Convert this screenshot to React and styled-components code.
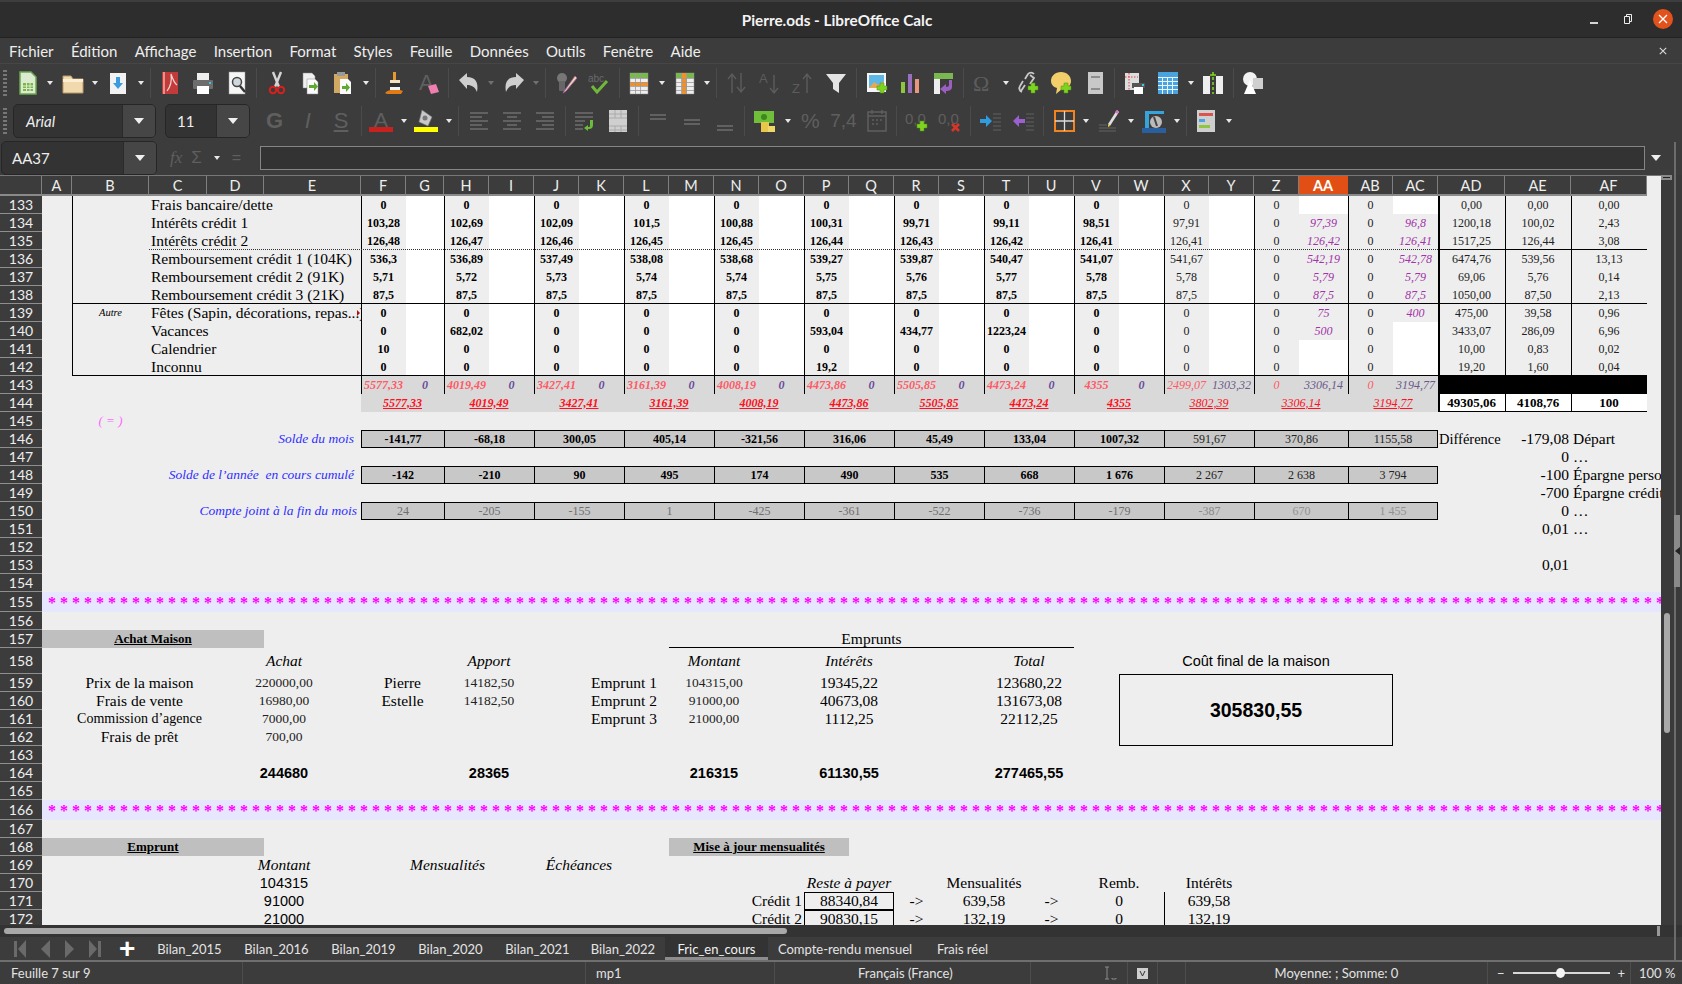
import React from 'react';
import styled, { createGlobalStyle, css } from 'styled-components';

const UI = `Lato, "Noto Sans", sans-serif`;
const SERIF = `"Liberation Serif", serif`;
const SANS = `"Liberation Sans", sans-serif`;

const Global = createGlobalStyle`
  html, body { margin: 0; width: 1682px; height: 984px; overflow: hidden; background: #3c3c3c; }
  * { box-sizing: border-box; }
`;

/* ---------- window chrome ---------- */
const Window = styled.div`
  position: relative;
  width: 1682px;
  height: 984px;
  display: flex;
  flex-direction: column;
  background: #3c3c3c;
  color: #eee;
  font-family: ${UI};
  overflow: hidden;
`;
const TitleBar = styled.div`
  height: 38px;
  flex: none;
  position: relative;
  display: flex;
  align-items: center;
  justify-content: center;
  padding-right: 8px;
  background: #2d2d2d;
  border-top: 2px solid #3d3d3d;
  border-bottom: 1px solid #232323;
  font-size: 15.3px;
  font-weight: 700;
  color: #f4f4f4;
`;
const WinButtons = styled.div`
  position: absolute;
  right: 9px;
  top: 7px;
  display: flex;
  align-items: center;
  gap: 17px;
`;
const WinClose = styled.div`
  width: 20px;
  height: 20px;
  margin-left: 1px;
  border-radius: 50%;
  background: #e2521d;
  display: flex;
  align-items: center;
  justify-content: center;
`;
const MenuBar = styled.div`
  height: 25px;
  flex: none;
  display: flex;
  align-items: center;
  justify-content: space-between;
  padding: 0 15px 0 9px;
`;
const MenuList = styled.div`
  display: flex;
  gap: 17.3px;
  font-size: 15px;
  color: #eee;
`;
const ToolBar = styled.div`
  height: ${p => p.$h}px;
  flex: none;
  display: flex;
  align-items: center;
  padding-left: 3px;
  border-top: ${p => (p.$line ? '1px solid #464646' : '0')};
`;
const Grip = styled.div`
  width: 4px;
  height: 26px;
  margin-right: ${p => p.$gap}px;
  background: repeating-linear-gradient(#777 0 2px, transparent 2px 4px);
  flex: none;
`;
const ToolBtn = styled.div`
  width: 33.2px;
  height: 28px;
  flex: none;
  display: flex;
  align-items: center;
  justify-content: center;
`;
const Caret = styled.div`
  width: 12px;
  flex: none;
  display: flex;
  justify-content: center;
  &::before {
    content: '';
    border-left: 3.5px solid transparent;
    border-right: 3.5px solid transparent;
    border-top: 4px solid ${p => (p.$dim ? '#707070' : '#e8e8e8')};
  }
`;
const ToolSep = styled.div`
  width: 1px;
  height: 30px;
  margin: 0 3px;
  flex: none;
  background: #4b4b4b;
`;
const FontBox = styled.div`
  width: ${p => p.$w}px;
  height: 34px;
  flex: none;
  margin-right: ${p => p.$mr}px;
  display: flex;
  background: #333;
  border: 1px solid #262626;
  border-radius: 5px;
  font-size: 15px;
  font-style: ${p => (p.$italic ? 'italic' : 'normal')};
  color: #eee;
  overflow: hidden;
`;
const FontValue = styled.div`
  flex: 1;
  display: flex;
  align-items: center;
  padding-left: ${p => p.$pad}px;
`;
const FontDrop = styled.div`
  width: ${p => p.$w}px;
  background: #464646;
  border-left: 1px solid #2a2a2a;
  display: flex;
  align-items: center;
  justify-content: center;
  &::before {
    content: '';
    border-left: 5px solid transparent;
    border-right: 5px solid transparent;
    border-top: 6px solid #f0f0f0;
  }
`;
const GlyphBtn = styled.span`
  font-family: ${p => (p.$serif ? SERIF : SANS)};
  font-size: ${p => p.$size || 22}px;
  font-style: ${p => (p.$italic ? 'italic' : 'normal')};
  font-weight: ${p => (p.$bold ? 700 : 400)};
  text-decoration: ${p => (p.$under ? 'underline' : 'none')};
  color: #5f5f5f;
`;
const FormulaBar = styled.div`
  height: 34px;
  flex: none;
  display: flex;
  align-items: center;
  padding-left: 1px;
`;
const FxTools = styled.div`
  width: 103px;
  flex: none;
  display: flex;
  align-items: center;
  padding-left: 13px;
  gap: 9px;
  color: #5f5f5f;
  font-size: 18px;
`;
const FormulaInput = styled.div`
  width: 1385px;
  height: 24px;
  flex: none;
  background: #333;
  border: 1px solid #858585;
`;
const FormulaDrop = styled.div`
  margin-left: 6px;
  border-left: 5px solid transparent;
  border-right: 5px solid transparent;
  border-top: 6px solid #eee;
`;

/* ---------- sheet ---------- */
const Workspace = styled.div`
  height: 750px;
  flex: none;
  display: flex;
`;
const Sheet = styled.div`
  width: 1661px;
  height: 750px;
  flex: none;
  overflow: hidden;
  display: grid;
  background: #eeeeee;
  border-top: 1px solid #777;
  align-content: start;
  color: #000;
`;
const at = (col, colEnd, row, rowEnd) => ({
  style: { gridColumn: `${col} / ${colEnd}`, gridRow: `${row} / ${rowEnd}` },
});
const ColHead = styled.div.attrs(p => at(p.$c, p.$c + 1, 1, 2))`
  display: flex;
  align-items: center;
  justify-content: center;
  background: ${p => (p.$on ? '#e24f14' : '#3c3c3c')};
  color: ${p => (p.$on ? '#fff' : '#eee')};
  font-family: ${UI};
  font-size: 14.5px;
  font-weight: ${p => (p.$on ? 700 : 400)};
  border-right: 1px solid ${p => (p.$on ? '#e24f14' : '#808080')};
  border-bottom: 2px solid #8a8a8a;
`;
const RowHead = styled.div.attrs(p => at(1, 2, p.$r, p.$r + 1))`
  display: flex;
  align-items: center;
  justify-content: center;
  background: #3c3c3c;
  color: #eee;
  font-family: ${UI};
  font-size: 14px;
  border-bottom: 1px solid #8f8f8f;
`;
const kinds = {
  label: css`font-size: 15.5px; text-align: left; padding-left: 2px;`,
  num: css`font-size: 12px; font-weight: 700; text-align: center;`,
  reg: css`font-size: 12px; text-align: center; color: #222;`,
  purple: css`font-size: 12px; font-style: italic; text-align: center; color: #a233a8;`,
  pink: css`font-size: 12px; font-style: italic; font-weight: 700; text-align: center; color: #ff5a66;`,
  violet: css`font-size: 12px; font-style: italic; font-weight: 700; text-align: center; color: #6a4b9a;`,
  pinkThin: css`font-size: 12px; font-style: italic; text-align: center; color: #ff5a66;`,
  violetThin: css`font-size: 12px; font-style: italic; text-align: center; color: #6a5a8c;`,
  sum: css`font-size: 12px; font-style: italic; font-weight: 700; text-align: center; color: #ff1020; text-decoration: underline;`,
  sumThin: css`font-size: 12px; font-style: italic; text-align: center; color: #ff1020; text-decoration: underline;`,
  total: css`font-size: 13px; font-weight: 700; text-align: center;`,
  autre: css`font-size: 10.5px; font-style: italic; text-align: center;`,
  equal: css`font-size: 13px; font-style: italic; text-align: center; color: #ff66ff;`,
  blue: css`font-size: 13.5px; font-style: italic; text-align: right; color: #2f2fff; padding-right: 7px;`,
  blueTight: css`font-size: 13.5px; font-style: italic; text-align: right; color: #2f2fff; padding-right: 4px;`,
  plain: css`font-size: 15.5px; text-align: center;`,
  plainNarrow: css`font-size: 14px; text-align: center;`,
  plainLeft: css`font-size: 15.5px; text-align: left; padding-left: 2px;`,
  plainRight: css`font-size: 15.5px; text-align: right; padding-right: 2px;`,
  diff: css`font-size: 14.5px; text-align: left; padding-left: 1px;`,
  small: css`font-size: 13.5px; text-align: center; color: #222;`,
  head: css`font-size: 15.5px; font-style: italic; text-align: center;`,
  section: css`font-size: 13px; font-weight: 700; text-align: center; text-decoration: underline; background: #bfbfbf;`,
  sansBig: css`font-family: ${SANS}; font-size: 14.5px; text-align: center;`,
  sansBold: css`font-family: ${SANS}; font-size: 14.5px; font-weight: 700; text-align: center;`,
  grand: css`font-family: ${SANS}; font-size: 19.5px; font-weight: 700; display: flex; align-items: center; justify-content: center;`,
  stars: css`font-size: 16px; font-weight: 700; color: #ff00ff; background: #e6e6ff; padding-left: 6px; letter-spacing: 0; line-height: 22px;`,
};
const Cell = styled.div.attrs(p => at(p.$c, p.$e, p.$r, p.$re))`
  font-family: ${SERIF};
  line-height: ${p => (p.$tall ? '26px' : '18px')};
  white-space: pre;
  overflow: hidden;
  min-width: 0;
  ${p => kinds[p.$kind]}
  ${p => p.$bg && `background: ${p.$bg};`}
  ${p => p.$color && `color: ${p.$color};`}
  ${p => p.$boxed && `border: 1px solid #000; border-right: ${p.$last ? '1px solid #000' : '0'}; line-height: 17px;`}
`;
const Rule = styled.div.attrs(p => at(p.$c, p.$e, p.$r, p.$re))`
  pointer-events: none;
  z-index: 1;
  ${p => p.$side === 'left' && `border-left: ${p.$w || 1}px solid #000;`}
  ${p => p.$side === 'bottom' && `border-bottom: 1px ${p.$dot ? 'dotted #333' : 'solid #000'};`}
  ${p => p.$side === 'box' && `border: 1px solid #000;`}
`;
const OverflowMark = styled.div.attrs(p => at(p.$c, p.$e, p.$r, p.$re))`
  justify-self: end;
  align-self: center;
  margin-right: 1px;
  border-top: 3.5px solid transparent;
  border-bottom: 3.5px solid transparent;
  border-left: 3px solid #b01010;
`;
const VScroll = styled.div`
  width: 21px;
  flex: none;
  position: relative;
  background: #3a3a3a;
`;
const SplitBox = styled.div`
  width: 11px;
  height: 5px;
  background: #8a8a8a;
  position: relative;
  &::after {
    content: '';
    position: absolute;
    left: 2px;
    top: 2px;
    width: 7px;
    height: 1px;
    background: #222;
  }
`;
const VThumb = styled.div`
  position: absolute;
  left: 3px;
  top: 438px;
  width: 6px;
  height: 120px;
  border-radius: 3px;
  background: #a8a8a8;
`;
const SideRail = styled.div`
  position: absolute;
  left: 1674px;
  top: 142px;
  width: 2px;
  height: 818px;
  background: #6c6c6c;
`;
const SideHandle = styled.div`
  position: absolute;
  left: 0;
  top: 373px;
  width: 6px;
  height: 72px;
  background: #8a8a8a;
  display: flex;
  align-items: center;
  justify-content: center;
  &::before {
    content: '';
    border-top: 4px solid transparent;
    border-bottom: 4px solid transparent;
    border-right: 5px solid #222;
  }
`;
const HScroll = styled.div`
  height: 12px;
  flex: none;
  position: relative;
  background: #333;
`;
const HThumb = styled.div`
  position: absolute;
  left: 4px;
  top: 3px;
  width: 783px;
  height: 6px;
  border-radius: 3px;
  background: #a8a8a8;
`;
const HSplit = styled.div`
  position: absolute;
  left: 1656px;
  top: 1px;
  width: 4px;
  height: 10px;
  background: #999;
  border-left: 1px solid #333;
`;

/* ---------- tabs and status ---------- */
const TabBar = styled.div`
  height: 25px;
  flex: none;
  display: flex;
  font-size: 13px;
  border-bottom: 2px solid #6f6f6f;
`;
const TabNav = styled.div`
  width: 146px;
  flex: none;
  display: flex;
  align-items: center;
  padding-left: 13px;
  gap: 11px;
`;
const AddTab = styled.div`
  margin-left: 6px;
  color: #fff;
  font-family: ${SANS};
  font-size: 28px;
  font-weight: 700;
  line-height: 20px;
`;
const Tab = styled.div`
  width: ${p => p.$w}px;
  flex: none;
  display: flex;
  align-items: center;
  justify-content: center;
  color: ${p => (p.$on ? '#f2f2f2' : '#e4e4e4')};
  background: ${p => (p.$on ? '#333' : 'transparent')};
  box-shadow: ${p => (p.$on ? 'inset 0 -3px 0 #8c8c8c' : 'none')};
`;
const StatusBar = styled.div`
  flex: 1;
  display: flex;
  align-items: center;
  font-size: 13px;
  color: #e2e2e2;
`;
const StatusCell = styled.div`
  width: ${p => p.$w}px;
  height: 22px;
  flex: none;
  display: flex;
  align-items: center;
  justify-content: ${p => p.$align || 'flex-start'};
  gap: 8px;
  padding-left: ${p => p.$pad || 0}px;
  border-right: ${p => (p.$end ? '0' : '1px solid #4d4d4d')};
`;
const ZoomTrack = styled.div`
  width: 97px;
  height: 2px;
  background: #d8d8d8;
  position: relative;
  &::after {
    content: '';
    position: absolute;
    left: 43px;
    top: -4px;
    width: 9px;
    height: 10px;
    border-radius: 50%;
    background: #f4f4f4;
  }
`;

/* ---------- icons ---------- */
const G = ({ children, w = 24, h = 24 }) => (
  <svg width={w} height={h} viewBox="0 0 24 24">{children}</svg>
);
const lines = (ys, x1, x2, c = '#6e6e6e') =>
  ys.map(y => <path key={y} d={`M${x1} ${y}H${x2}`} stroke={c} strokeWidth="1.5" />);
const Plus = ({ x = 14, y = 14 }) => (
  <path d={`M${x + 3} ${y}h4v3h3v4h-3v3h-4v-3h-3v-4h3z`} fill="#7ed321" stroke="#4c8f10" strokeWidth=".5" />
);
const gridTable = (fill, on) => (
  <>
    <rect x="3" y="2" width="18" height="21" fill="#eee" stroke="#888" strokeWidth=".5" />
    <rect x="3" y="2" width="18" height="5" fill={fill} />
    {on}
    {[8, 13].map(x => <path key={x} d={`M${x + .5} 2V23`} stroke="#999" strokeWidth=".8" />)}
    {[7, 11, 15, 19].map(y => <path key={y} d={`M3 ${y + .5}H21`} stroke="#999" strokeWidth=".8" />)}
  </>
);

const icons = {
  new: <G><path d="M4 1h11l5 5v17H4z" fill="#dcebd0" stroke="#6aa84f" strokeWidth="1.5" /><path d="M7 12h10v8H7z" fill="#7ab648" /><path d="M7 15h10M7 17.5h10M10.5 12v8M14 12v8" stroke="#dcebd0" /></G>,
  open: <G><path d="M2 5h8l2 3h10v14H2z" fill="#f0d9ac" stroke="#b89a68" /><path d="M2 8h20v3H2z" fill="#fbeed2" /></G>,
  save: <G><rect x="4" y="2" width="16" height="21" fill="#f2f2f2" /><path d="M10 6h4v6h3l-5 6-5-6h3z" fill="#3a9be0" /></G>,
  pdf: <G><rect x="4" y="1" width="16" height="22" fill="#c23b3b" /><path d="M6 1v22" stroke="#f2b0a8" strokeWidth="1.5" /><path d="M9 20c4-5 5-10 4-17 2 6 3 9 6 11" fill="none" stroke="#f5d5d0" strokeWidth="1.2" /></G>,
  print: <G><rect x="6" y="2" width="12" height="8" fill="#eee" /><rect x="2" y="9" width="20" height="9" rx="1" fill="#6d6d6d" /><rect x="6" y="15" width="12" height="8" fill="#fff" /><rect x="18" y="11" width="2" height="2" fill="#43c4e8" /></G>,
  preview: <G><rect x="4" y="1" width="16" height="22" fill="#f6f6f6" stroke="#999" strokeWidth=".5" /><circle cx="12" cy="11" r="4.5" fill="#cfd8dc" stroke="#444" strokeWidth="1.5" /><path d="M15 15l5 6" stroke="#333" strokeWidth="2.5" /></G>,
  cut: <G><path d="M8 1l6 15M16 1l-6 15" stroke="#d5d5d5" strokeWidth="2.4" /><circle cx="8" cy="19" r="3.2" fill="none" stroke="#d9201c" strokeWidth="2" /><circle cx="16" cy="19" r="3.2" fill="none" stroke="#d9201c" strokeWidth="2" /></G>,
  copy: <G><path d="M5 2h9l3 3v12H5z" fill="#f0f0f0" stroke="#888" strokeWidth=".5" /><path d="M9 8h8l3 3v12H9z" fill="#fafafa" stroke="#888" strokeWidth=".5" /><path d="M16 11v3h-5v3h5v3l4-4.5z" fill="#5fa832" /></G>,
  paste: <G><rect x="3" y="3" width="14" height="19" fill="#d3a862" /><rect x="6" y="1" width="8" height="4" fill="#999" /><path d="M9 8h8l3 3v12H9z" fill="#fafafa" /><path d="M15 12v3h-4v3h4v3l4-4.5z" fill="#5fa832" /></G>,
  brush: <G><rect x="10" y="1" width="3" height="8" fill="#e69a2e" /><rect x="7" y="9" width="10" height="4" fill="#f4e2c0" /><rect x="7" y="12" width="10" height="4" fill="#333" /><path d="M7 16h10v3H7z" fill="#f5f5f5" /><path d="M2 22c3-4 8-3 15-3l3 1-2 3H4z" fill="#e07b16" /></G>,
  clear: <G><text x="3" y="19" fontFamily={SANS} fontSize="22" fill="#5f5f5f">A</text><path d="M12 15l8-2 3 8-8 2z" fill="#ef7fae" /></G>,
  undo: <G><path d="M2 9l8-7v4c8 0 12 5 10 15-2-5-5-7-10-7v4z" fill="#cfcfcf" /></G>,
  redo: <G><path d="M22 9l-8-7v4C6 6 2 11 4 21c2-5 5-7 10-7v4z" fill="#cfcfcf" /></G>,
  find: <G><circle cx="8" cy="7" r="5" fill="#777" /><rect x="5" y="10" width="6" height="10" rx="1" fill="#666" /><path d="M21 5L11 19l-2 3 3-2L23 7z" fill="#e8d9a8" stroke="#b25bb5" strokeWidth=".8" /></G>,
  spell: <G><text x="1" y="11" fontFamily={SANS} fontSize="10" fill="#6a6a6a">abc</text><path d="M5 15l5 6 10-11" fill="none" stroke="#71b83a" strokeWidth="3" /></G>,
  rows: <G>{gridTable('#79b84e', <rect x="3" y="11" width="18" height="4" fill="#f2912a" />)}</G>,
  cols: <G>{gridTable('#79b84e', <rect x="9" y="2" width="5" height="21" fill="#f2912a" />)}</G>,
  sort: <G><path d="M7 22V3M3 8l4-5 4 5M16 2v19M12 16l4 5 4-5" fill="none" stroke="#5c5c5c" strokeWidth="1.4" /></G>,
  sortAZ: <G><text x="1" y="12" fontFamily={SANS} fontSize="13" fill="#5c5c5c">A</text><path d="M16 4v18M12 17l4 5 4-5" fill="none" stroke="#5c5c5c" strokeWidth="1.4" /></G>,
  sortZA: <G><text x="1" y="22" fontFamily={SANS} fontSize="13" fill="#5c5c5c">Z</text><path d="M16 22V3M12 8l4-5 4 5" fill="none" stroke="#5c5c5c" strokeWidth="1.4" /></G>,
  filter: <G><path d="M2 3h20l-7 9v10l-6-4v-6z" fill="#e4e4e4" /></G>,
  image: <G><rect x="2" y="2" width="19" height="19" fill="#f5f5f5" /><rect x="4" y="4" width="15" height="13" fill="#5db8e8" /><path d="M4 17l5-6 4 3 6-4v7z" fill="#e8a850" /><Plus x={12} y={12} /></G>,
  chart: <G><rect x="3" y="11" width="4" height="11" fill="#8ec63f" /><rect x="10" y="3" width="4" height="19" fill="#9a6fc0" /><rect x="17" y="8" width="4" height="14" fill="#e9967a" /></G>,
  pivot: <G><rect x="3" y="2" width="19" height="6" fill="#79b84e" /><rect x="3" y="8" width="6" height="15" fill="#eee" /><path d="M21 9v7c0 3-3 4-6 4v3l-6-5 6-5v3c2 0 3-1 3-2V9z" fill="#9b5fc0" /></G>,
  omega: <G><text x="2" y="20" fontFamily={SERIF} fontSize="22" fill="#5c5c5c">Ω</text></G>,
  link: <G><path d="M18 3a4 4 0 0 0-6 0l-3 5M6 21a4 4 0 0 1-2-6l3-5M14 4l4 3-4 6M9 14l-4 6" fill="none" stroke="#c9c9c9" strokeWidth="1.8" /><Plus x={12} y={12} /></G>,
  comment: <G><path d="M12 1c6 0 10 4 10 9s-4 8-9 8l-6 5 1-6c-4-1-6-4-6-7 0-5 4-9 10-9z" fill="#f2cf6a" /><Plus x={12} y={12} /></G>,
  headfoot: <G><rect x="5" y="1" width="15" height="22" fill="#c8c8c8" /><path d="M8 6h9M8 18h9" stroke="#8d8d8d" strokeWidth="2" /></G>,
  printArea: <G><rect x="2" y="2" width="14" height="17" fill="#ddd" /><path d="M2 6h13M6 2v17" stroke="#e04040" strokeDasharray="1.5 1.5" /><rect x="9" y="12" width="13" height="5" fill="#555" /><rect x="11" y="16" width="9" height="7" fill="#fff" /><rect x="19" y="13" width="2" height="2" fill="#43c4e8" /></G>,
  freeze: <G><rect x="2" y="1" width="20" height="22" fill="#4aa3df" />{[6, 11, 16].map(x => <path key={x} d={`M${x + .5} 6V23`} stroke="#e8f4fb" />)}{[6, 10, 14, 18].map(y => <path key={y} d={`M2 ${y + .5}H22`} stroke="#e8f4fb" />)}</G>,
  split: <G><rect x="2" y="5" width="7" height="18" fill="#eee" /><rect x="15" y="5" width="7" height="18" fill="#eee" /><path d="M12 1v22" stroke="#7ed321" strokeWidth="1.6" strokeDasharray="3 2" /><path d="M9 4h6" stroke="#7ed321" strokeWidth="1.6" /></G>,
  shapes: <G><circle cx="9" cy="8" r="7" fill="#f2f2f2" /><rect x="12" y="7" width="10" height="11" fill="#cfcfcf" /><path d="M9 9l6 14H3z" fill="#fff" /></G>,
  left: <G>{lines([4, 8, 12, 16, 20], 3, 21).map((l, i) => React.cloneElement(l, { d: `M3 ${4 + i * 4}H${i % 2 ? 15 : 21}` }))}</G>,
  center: <G>{lines([4, 8, 12, 16, 20], 3, 21).map((l, i) => React.cloneElement(l, { d: i % 2 ? `M7 ${4 + i * 4}H17` : `M3 ${4 + i * 4}H21` }))}</G>,
  right: <G>{lines([4, 8, 12, 16, 20], 3, 21).map((l, i) => React.cloneElement(l, { d: `M${i % 2 ? 9 : 3} ${4 + i * 4}H21` }))}</G>,
  wrap: <G>{lines([4, 8], 2, 20)}<path d="M2 12h10M2 16h8M2 20h8" stroke="#6e6e6e" strokeWidth="1.5" /><path d="M20 11v5c0 3-2 4-4 4h-1v2l-4-3 4-3v2h1c1 0 1-1 1-2v-5z" fill="#6dbb3a" /></G>,
  merge: <G><rect x="3" y="1" width="18" height="22" fill="#cfcfcf" />{[5, 9, 17, 21].map(y => <path key={y} d={`M3 ${y}H21`} stroke="#aaa" />)}<path d="M9 1v8M15 1v8M9 17v6M15 17v6" stroke="#aaa" /></G>,
  vtop: <G>{lines([6, 10], 4, 20)}</G>,
  vmid: <G>{lines([11, 15], 4, 20)}</G>,
  vbot: <G>{lines([17, 21], 4, 20)}</G>,
  money: <G><rect x="1" y="2" width="20" height="12" fill="#6fbf3a" /><circle cx="11" cy="8" r="3" fill="#3d8a1c" /><rect x="8" y="13" width="8" height="10" fill="#e8c84a" /><rect x="15" y="17" width="7" height="6" fill="#f0d868" /></G>,
  date: <G><rect x="3" y="3" width="18" height="19" fill="none" stroke="#5f5f5f" strokeWidth="1.5" /><path d="M3 7h18M7 1v4M17 1v4" stroke="#5f5f5f" strokeWidth="1.5" /><path d="M7 11h2M11 11h2M15 11h2M7 15h2M11 15h2" stroke="#5f5f5f" strokeWidth="1.5" /></G>,
  addDec: <G><text x="0" y="15" fontFamily={SANS} fontSize="15" fill="#5f5f5f">0,0</text><Plus x={12} y={12} /></G>,
  delDec: <G><text x="0" y="15" fontFamily={SANS} fontSize="15" fill="#5f5f5f">0,0</text><path d="M14 15l7 7M21 15l-7 7" stroke="#d8352a" strokeWidth="2.6" /></G>,
  indent: <G><path d="M2 10h6V6l6 6-6 6v-4H2z" fill="#2f9ce0" />{lines([5, 9, 13, 17, 21], 15, 23, '#555')}</G>,
  outdent: <G><path d="M14 10H8V6l-6 6 6 6v-4h6z" fill="#9a5fd0" />{lines([5, 9, 13, 17, 21], 15, 23, '#555')}</G>,
  border: <G><rect x="3" y="2" width="19" height="20" fill="none" stroke="#f2841e" strokeWidth="2" /><path d="M12.5 2v20M3 12h19" stroke="#dcdcdc" strokeWidth="1.3" /></G>,
  lineStyle: <G><path d="M20 1l-9 14 2 2 9-14z" fill="#ddd" /><path d="M20 1l2 2-2 2-2-2z" fill="#e070d0" /><path d="M11 15l2 2-2 1z" fill="#f0d020" /><path d="M2 16h8M2 19h17M2 22h17" stroke="#555" strokeWidth="1.3" /></G>,
  borderColor: <G><path d="M3 2h19v3H7v14H3z" fill="#36a4dc" /><rect x="0" y="19" width="24" height="5" fill="#2a5f9e" /><circle cx="14" cy="13" r="6" fill="#bbb" /><path d="M12 8l3 9" stroke="#444" strokeWidth="2" /></G>,
  cond: <G><rect x="3" y="1" width="18" height="22" fill="#cfcfcf" /><rect x="5" y="4" width="14" height="3" fill="#d9534f" /><rect x="5" y="10" width="6" height="3" fill="#4aa3df" /><rect x="5" y="16" width="11" height="3" fill="#8ec63f" /></G>,
  first: <svg width="14" height="20" viewBox="0 0 14 20"><path d="M1 2h3v16H1zM13 1v18L5 10z" fill="#6a6a6a" /></svg>,
  prev: <svg width="14" height="20" viewBox="0 0 14 20"><path d="M12 1v18L3 10z" fill="#6a6a6a" /></svg>,
  next: <svg width="14" height="20" viewBox="0 0 14 20"><path d="M2 1v18l9-9z" fill="#6a6a6a" /></svg>,
  last: <svg width="14" height="20" viewBox="0 0 14 20"><path d="M1 1v18l8-9zM10 2h3v16h-3z" fill="#6a6a6a" /></svg>,
};

const SEP = 'sep';
const TOOLS_TOP = [
  ['new', 1], ['open', 1], ['save', 1], SEP, ['pdf'], ['print'], ['preview'], SEP,
  ['cut'], ['copy'], ['paste', 1], SEP, ['brush'], ['clear'], SEP,
  ['undo', 2], ['redo', 2], SEP, ['find'], ['spell'], SEP, ['rows', 1], ['cols', 1], SEP,
  ['sort'], ['sortAZ'], ['sortZA'], ['filter'], SEP, ['image'], ['chart'], ['pivot'], SEP,
  ['omega', 1], ['link'], ['comment'], ['headfoot'], SEP, ['printArea'], ['freeze', 1], ['split'], SEP, ['shapes'],
];
const TOOLS_BOTTOM = [
  ['G'], ['I'], ['S'], SEP, ['colorA', 1], ['colorBg', 1], SEP, ['left'], ['center'], ['right'], SEP,
  ['wrap'], ['merge'], SEP, ['vtop'], ['vmid'], ['vbot'], SEP,
  ['money', 1], ['percent'], ['seven'], ['date'], SEP, ['addDec'], ['delDec'], SEP, ['indent'], ['outdent'], SEP,
  ['border', 1], ['lineStyle', 1], ['borderColor', 1], SEP, ['cond', 1],
];
const textTools = {
  G: <GlyphBtn $bold>G</GlyphBtn>,
  I: <GlyphBtn $italic>I</GlyphBtn>,
  S: <GlyphBtn $under>S</GlyphBtn>,
  percent: <GlyphBtn $size={21}>%</GlyphBtn>,
  seven: <GlyphBtn $size={19}>7,4</GlyphBtn>,
  colorA: (
    <G><text x="5" y="18" fontFamily={SANS} fontSize="21" fill="#5f5f5f">A</text><rect x="0" y="18" width="24" height="5" fill="#c9211e" /></G>
  ),
  colorBg: (
    <G><path d="M8 1l10 7-4 9-9-4z" fill="#c8c8c8" stroke="#777" strokeWidth=".6" /><circle cx="11" cy="9" r="2.5" fill="#777" /><rect x="0" y="18" width="24" height="5" fill="#ffff00" /></G>
  ),
};

const renderTools = list =>
  list.map((t, i) =>
    t === SEP ? (
      <ToolSep key={i} />
    ) : (
      <React.Fragment key={t[0]}>
        <ToolBtn>{icons[t[0]] || textTools[t[0]]}</ToolBtn>
        {t[1] && <Caret $dim={t[1] === 2} />}
      </React.Fragment>
    )
  );

/* ---------- sheet data ---------- */
const letters = 'ABCDEFGHIJKLMNOPQRSTUVWXYZ'.split('').concat(['AA', 'AB', 'AC', 'AD', 'AE', 'AF']);
const widths = { A: 30, B: 77, C: 58, D: 57, E: 97, F: 45, G: 38, AA: 49, AD: 67, AE: 66, AF: 76 };
const colWidth = l => widths[l] || 45;
const gridCols = `42px ${letters.map(l => `${colWidth(l)}px`).join(' ')} 14px`;
const firstRow = 133;
const rowNums = Array.from({ length: 40 }, (_, i) => firstRow + i);
const tallRows = { 155: 20, 158: 26, 166: 20 };
const gridRows = `20px ${rowNums.map(n => `${tallRows[n] || 18}px`).join(' ')}`;
const cx = l => letters.indexOf(l) + 2;
const rx = n => n - firstRow + 2;

const cells = [];
const put = (from, to, row, kind, text, extra = {}) =>
  cells.push({ from, to, row, kind, text, ...extra });

const PAIR_STARTS = ['F', 'H', 'J', 'L', 'N', 'P', 'R', 'T', 'V', 'X', 'Z', 'AB'];
const PAIR_ENDS = ['G', 'I', 'K', 'M', 'O', 'Q', 'S', 'U', 'W', 'Y', 'AA', 'AC'];

const BLOCK = {
  133: ['Frais bancaire/dette', '0 0 0 0 0 0 0 0 0 0', '', '', '0,00 0,00 0,00'],
  134: ['Intérêts crédit 1', '103,28 102,69 102,09 101,5 100,88 100,31 99,71 99,11 98,51 97,91', '97,39', '96,8', '1200,18 100,02 2,43'],
  135: ['Intérêts crédit 2', '126,48 126,47 126,46 126,45 126,45 126,44 126,43 126,42 126,41 126,41', '126,42', '126,41', '1517,25 126,44 3,08'],
  136: ['Remboursement crédit 1 (104K)', '536,3 536,89 537,49 538,08 538,68 539,27 539,87 540,47 541,07 541,67', '542,19', '542,78', '6474,76 539,56 13,13'],
  137: ['Remboursement crédit 2 (91K)', '5,71 5,72 5,73 5,74 5,74 5,75 5,76 5,77 5,78 5,78', '5,79', '5,79', '69,06 5,76 0,14'],
  138: ['Remboursement crédit 3 (21K)', '87,5 87,5 87,5 87,5 87,5 87,5 87,5 87,5 87,5 87,5', '87,5', '87,5', '1050,00 87,50 2,13'],
  139: ['Fêtes (Sapin, décorations, repas...)', '0 0 0 0 0 0 0 0 0 0', '75', '400', '475,00 39,58 0,96'],
  140: ['Vacances', '0 682,02 0 0 0 593,04 434,77 1223,24 0 0', '500', '', '3433,07 286,09 6,96'],
  141: ['Calendrier', '10 0 0 0 0 0 0 0 0 0', '', '', '10,00 0,83 0,02'],
  142: ['Inconnu', '0 0 0 0 0 19,2 0 0 0 0', '', '', '19,20 1,60 0,04'],
};
Object.entries(BLOCK).forEach(([r, [label, months, aa, ac, totals]]) => {
  const row = Number(r);
  put('C', 'E', row, 'label', label);
  months.split(' ').forEach((v, i) => {
    put(PAIR_STARTS[i], PAIR_STARTS[i], row, i === 9 ? 'reg' : 'num', v);
    put(PAIR_ENDS[i], PAIR_ENDS[i], row, 'reg', '', { bg: '#fff' });
  });
  put('Z', 'Z', row, 'reg', '0');
  put('AB', 'AB', row, 'reg', '0');
  put('AA', 'AA', row, 'purple', aa, { bg: aa ? undefined : '#fff' });
  put('AC', 'AC', row, 'purple', ac, { bg: ac ? undefined : '#fff' });
  totals.split(' ').forEach((v, i) => put(['AD', 'AE', 'AF'][i], ['AD', 'AE', 'AF'][i], row, 'reg', v));
});
put('B', 'B', 139, 'autre', 'Autre');

const ROW143 = ['5577,33', '4019,49', '3427,41', '3161,39', '4008,19', '4473,86', '5505,85', '4473,24', '4355'];
put('F', 'AC', 143, 'reg', '', { bg: '#d9d9d9' });
put('F', 'AC', 144, 'reg', '', { bg: '#d9d9d9' });
ROW143.forEach((v, i) => {
  put(PAIR_STARTS[i], PAIR_STARTS[i], 143, 'pink', v);
  put(PAIR_ENDS[i], PAIR_ENDS[i], 143, 'violet', '0');
  put(PAIR_STARTS[i], PAIR_ENDS[i], 144, 'sum', v);
});
[['X', '2499,07', 'Y', '1303,32'], ['Z', '0', 'AA', '3306,14'], ['AB', '0', 'AC', '3194,77']].forEach(([a, v, b, w]) => {
  put(a, a, 143, 'pinkThin', v);
  put(b, b, 143, 'violetThin', w);
});
put('X', 'Y', 144, 'sumThin', '3802,39');
put('Z', 'AA', 144, 'sumThin', '3306,14');
put('AB', 'AC', 144, 'sumThin', '3194,77');
put('AD', 'AF', 143, 'reg', '', { bg: '#000' });
['49305,06', '4108,76', '100'].forEach((v, i) =>
  put(['AD', 'AE', 'AF'][i], ['AD', 'AE', 'AF'][i], 144, 'total', v, { bg: '#fff' })
);
put('B', 'B', 145, 'equal', '( = )');

const SOLDES = {
  146: ['Solde du mois', 'blue', '-141,77 -68,18 300,05 405,14 -321,56 316,06 45,49 133,04 1007,32 591,67 370,86 1155,58'],
  148: ['Solde de l’année  en cours cumulé', 'blue', '-142 -210 90 495 174 490 535 668 1\u00a0676 2\u00a0267 2\u00a0638 3\u00a0794'],
  150: ['Compte joint à la fin du mois', 'blueTight', '24 -205 -155 1 -425 -361 -522 -736 -179 -387 670 1\u00a0455'],
};
Object.entries(SOLDES).forEach(([r, [label, labelKind, vals]]) => {
  const row = Number(r);
  put('C', 'E', row, labelKind, label);
  vals.split(' ').forEach((v, i) => {
    let color;
    if (row === 150) color = i < 9 ? '#6f6f6f' : i === 9 ? '#8a8a8a' : '#929292';
    put(PAIR_STARTS[i], PAIR_ENDS[i], row, i < 9 && row !== 150 ? 'num' : 'reg', v, {
      bg: '#c8c8c8', boxed: true, last: i === 11, color,
    });
  });
});

put('AD', 'AD', 146, 'diff', 'Différence');
[[146, '-179,08', 'Départ'], [147, '0', '…'], [148, '-100', 'Épargne perso'], [149, '-700', 'Épargne crédit'], [150, '0', '…'], [151, '0,01', '…'], [153, '0,01', '']].forEach(([r, v, t]) => {
  put('AE', 'AE', r, 'plainRight', v);
  if (t) cells.push({ from: 'AF', to: null, row: r, kind: 'plainLeft', text: t });
});

const starLine = Array.from({ length: 135 }, () => '*').join(' ');
[155, 166].forEach(r => cells.push({ from: 'A', to: null, row: r, kind: 'stars', text: starLine }));

put('A', 'D', 157, 'section', 'Achat Maison');
put('M', 'U', 157, 'plain', 'Emprunts');
put('D', 'E', 158, 'head', 'Achat', { tall: true });
put('H', 'I', 158, 'head', 'Apport', { tall: true });
put('M', 'N', 158, 'head', 'Montant', { tall: true });
put('O', 'R', 158, 'head', 'Intérêts', { tall: true });
put('S', 'V', 158, 'head', 'Total', { tall: true });
put('W', 'AB', 158, 'sansBig', 'Coût final de la maison', { tall: true });
put('W', 'AB', 159, 'grand', '305830,55', { rowTo: 162 });

[
  [159, 'Prix de la maison', '220000,00', 'Pierre', '14182,50', 'Emprunt 1', '104315,00', '19345,22', '123680,22'],
  [160, 'Frais de vente', '16980,00', 'Estelle', '14182,50', 'Emprunt 2', '91000,00', '40673,08', '131673,08'],
  [161, 'Commission d’agence', '7000,00', '', '', 'Emprunt 3', '21000,00', '1112,25', '22112,25'],
  [162, 'Frais de prêt', '700,00', '', '', '', '', '', ''],
].forEach(([r, a, b, c, d, e, f, g, h]) => {
  put('B', 'C', r, r === 161 ? 'plainNarrow' : 'plain', a);
  put('D', 'E', r, 'small', b);
  if (c) put('F', 'G', r, 'plain', c);
  if (d) put('H', 'I', r, 'small', d);
  if (e) put('K', 'L', r, 'plain', e);
  if (f) put('M', 'N', r, 'small', f);
  if (g) put('O', 'R', r, 'plain', g);
  if (h) put('S', 'V', r, 'plain', h);
});
[['D', 'E', '244680'], ['H', 'I', '28365'], ['M', 'N', '216315'], ['O', 'R', '61130,55'], ['S', 'V', '277465,55']].forEach(([a, b, v]) =>
  put(a, b, 164, 'sansBold', v)
);

put('A', 'D', 168, 'section', 'Emprunt');
put('M', 'P', 168, 'section', 'Mise à jour mensualités');
put('D', 'E', 169, 'head', 'Montant');
put('F', 'I', 169, 'head', 'Mensualités');
put('J', 'K', 169, 'head', 'Échéances');
['104315', '91000', '21000'].forEach((v, i) => put('D', 'E', 170 + i, 'sansBig', v));
put('P', 'Q', 170, 'head', 'Reste à payer');
put('S', 'T', 170, 'plain', 'Mensualités');
put('V', 'W', 170, 'plain', 'Remb.');
put('X', 'Y', 170, 'plain', 'Intérêts');
[[171, 'Crédit 1', '88340,84', '639,58'], [172, 'Crédit 2', '90830,15', '132,19']].forEach(([r, label, due, month]) => {
  put('N', 'O', r, 'plainRight', label);
  put('P', 'Q', r, 'plain', due);
  put('R', 'R', r, 'plain', '->');
  put('S', 'T', r, 'plain', month);
  put('U', 'U', r, 'plain', '->');
  put('V', 'W', r, 'plain', '0');
  put('X', 'Y', r, 'plain', month);
});

const rules = [
  { c: 'B', e: 'B', r: 133, re: 142, side: 'left' },
  ...PAIR_STARTS.map(l => ({ c: l, e: l, r: 133, re: 143, side: 'left' })),
  { c: 'AD', e: 'AD', r: 133, re: 144, side: 'left', w: 2 },
  { c: 'AE', e: 'AE', r: 133, re: 144, side: 'left' },
  { c: 'AF', e: 'AF', r: 133, re: 144, side: 'left' },
  { c: 'C', e: 'AC', r: 135, re: 135, side: 'bottom', dot: true },
  { c: 'AD', e: 'AF', r: 135, re: 135, side: 'bottom' },
  { c: 'B', e: 'AF', r: 138, re: 138, side: 'bottom' },
  { c: 'B', e: 'AF', r: 142, re: 142, side: 'bottom' },
  { c: 'AD', e: 'AF', r: 144, re: 144, side: 'bottom' },
  { c: 'M', e: 'U', r: 157, re: 157, side: 'bottom' },
  { c: 'W', e: 'AB', r: 159, re: 162, side: 'box' },
  { c: 'P', e: 'Q', r: 171, re: 171, side: 'box' },
  { c: 'P', e: 'Q', r: 172, re: 172, side: 'box' },
  { c: 'X', e: 'X', r: 171, re: 172, side: 'left' },
];

const TABS = [
  ['Bilan_2015', 87], ['Bilan_2016', 87], ['Bilan_2019', 87], ['Bilan_2020', 87], ['Bilan_2021', 87], ['Bilan_2022', 84],
  ['Fric_en_cours', 103], ['Compte-rendu mensuel', 154], ['Frais réel', 81],
];
const MENUS = ['Fichier', 'Édition', 'Affichage', 'Insertion', 'Format', 'Styles', 'Feuille', 'Données', 'Outils', 'Fenêtre', 'Aide'];

const CloseX = ({ size, color = '#fff' }) => (
  <svg width={size} height={size} viewBox="0 0 10 10"><path d="M1 1l8 8M9 1l-8 8" stroke={color} strokeWidth="1.3" /></svg>
);

export default function App() {
  return (
    <Window>
      <Global />
      <TitleBar>
        Pierre.ods - LibreOffice Calc
        <WinButtons>
          <svg width="10" height="10" viewBox="0 0 10 10"><path d="M0 9h8" stroke="#fff" strokeWidth="1.6" /></svg>
          <svg width="18" height="12" viewBox="0 0 18 12"><path d="M7.5 3.5h5v7h-5zM9.5 3V1.5h5v7h-2" fill="none" stroke="#eee" /></svg>
          <WinClose><CloseX size={10} /></WinClose>
        </WinButtons>
      </TitleBar>
      <MenuBar>
        <MenuList>{MENUS.map(m => <span key={m}>{m}</span>)}</MenuList>
        <CloseX size={8} color="#ddd" />
      </MenuBar>
      <ToolBar $h={38} $line>
        <Grip $gap={4} />
        {renderTools(TOOLS_TOP)}
      </ToolBar>
      <ToolBar $h={40}>
        <Grip $gap={6} />
        <FontBox $w={143} $mr={9} $italic><FontValue $pad={12}>Arial</FontValue><FontDrop $w={33} /></FontBox>
        <FontBox $w={85} $mr={8}><FontValue $pad={11}>11</FontValue><FontDrop $w={33} /></FontBox>
        {renderTools(TOOLS_BOTTOM)}
      </ToolBar>
      <FormulaBar>
        <FontBox $w={156} $mr={0}><FontValue $pad={10}>AA37</FontValue><FontDrop $w={33} /></FontBox>
        <FxTools>
          <GlyphBtn $serif $italic $size={17}>fx</GlyphBtn>
          <GlyphBtn $size={17}>Σ</GlyphBtn>
          <Caret />
          <GlyphBtn $size={16}>=</GlyphBtn>
        </FxTools>
        <FormulaInput />
        <FormulaDrop />
      </FormulaBar>
      <Workspace>
        <Sheet style={{ gridTemplateColumns: gridCols, gridTemplateRows: gridRows }}>
          <ColHead $c={1} />
          {letters.map(l => <ColHead key={l} $c={cx(l)} $on={l === 'AA'}>{l}</ColHead>)}
          {rowNums.map(n => <RowHead key={n} $r={rx(n)}>{n}</RowHead>)}
          {cells.map((d, i) => (
            <Cell
              key={i}
              $c={cx(d.from)}
              $e={d.to ? cx(d.to) + 1 : letters.length + 3}
              $r={rx(d.row)}
              $re={rx(d.rowTo || d.row) + 1}
              $kind={d.kind}
              $bg={d.bg}
              $boxed={d.boxed}
              $last={d.last}
              $color={d.color}
              $tall={d.tall}
            >
              {d.text}
            </Cell>
          ))}
          {rules.map((l, i) => (
            <Rule key={i} $c={cx(l.c)} $e={cx(l.e) + 1} $r={rx(l.r)} $re={rx(l.re) + 1} $side={l.side} $dot={l.dot} $w={l.w} />
          ))}
          <OverflowMark $c={cx('C')} $e={cx('E') + 1} $r={rx(139)} $re={rx(139) + 1} />
        </Sheet>
        <VScroll>
          <SplitBox />
          <VThumb />
        </VScroll>
      </Workspace>
      <HScroll>
        <HThumb />
        <HSplit />
      </HScroll>
      <TabBar>
        <TabNav>
          {icons.first}{icons.prev}{icons.next}{icons.last}
          <AddTab>+</AddTab>
        </TabNav>
        {TABS.map(([name, w]) => <Tab key={name} $w={w} $on={name === 'Fric_en_cours'}>{name}</Tab>)}
      </TabBar>
      <StatusBar>
        <StatusCell $w={243} $pad={11}>Feuille 7 sur 9</StatusCell>
        <StatusCell $w={343} />
        <StatusCell $w={189} $pad={10}>mp1</StatusCell>
        <StatusCell $w={256} $pad={83}>Français (France)</StatusCell>
        <StatusCell $w={97} $pad={72}>
          <svg width="14" height="14" viewBox="0 0 14 14"><path d="M2 1h4M2 13h4M4 1v12M9 12v1h4v-1" fill="none" stroke="#8a8a8a" /></svg>
        </StatusCell>
        <StatusCell $w={30} $align="center">
          <svg width="11" height="11" viewBox="0 0 11 11"><rect width="11" height="11" fill="#cfcfcf" /><path d="M3 3l2.5 5 2.5-5" stroke="#333" fill="none" /></svg>
        </StatusCell>
        <StatusCell $w={28} />
        <StatusCell $w={302} $align="center">Moyenne: ; Somme: 0</StatusCell>
        <StatusCell $w={143} $pad={9}>
          <span>−</span>
          <ZoomTrack />
          <span>+</span>
        </StatusCell>
        <StatusCell $w={51} $pad={8} $end>100 %</StatusCell>
      </StatusBar>
      <SideRail><SideHandle /></SideRail>
    </Window>
  );
}
